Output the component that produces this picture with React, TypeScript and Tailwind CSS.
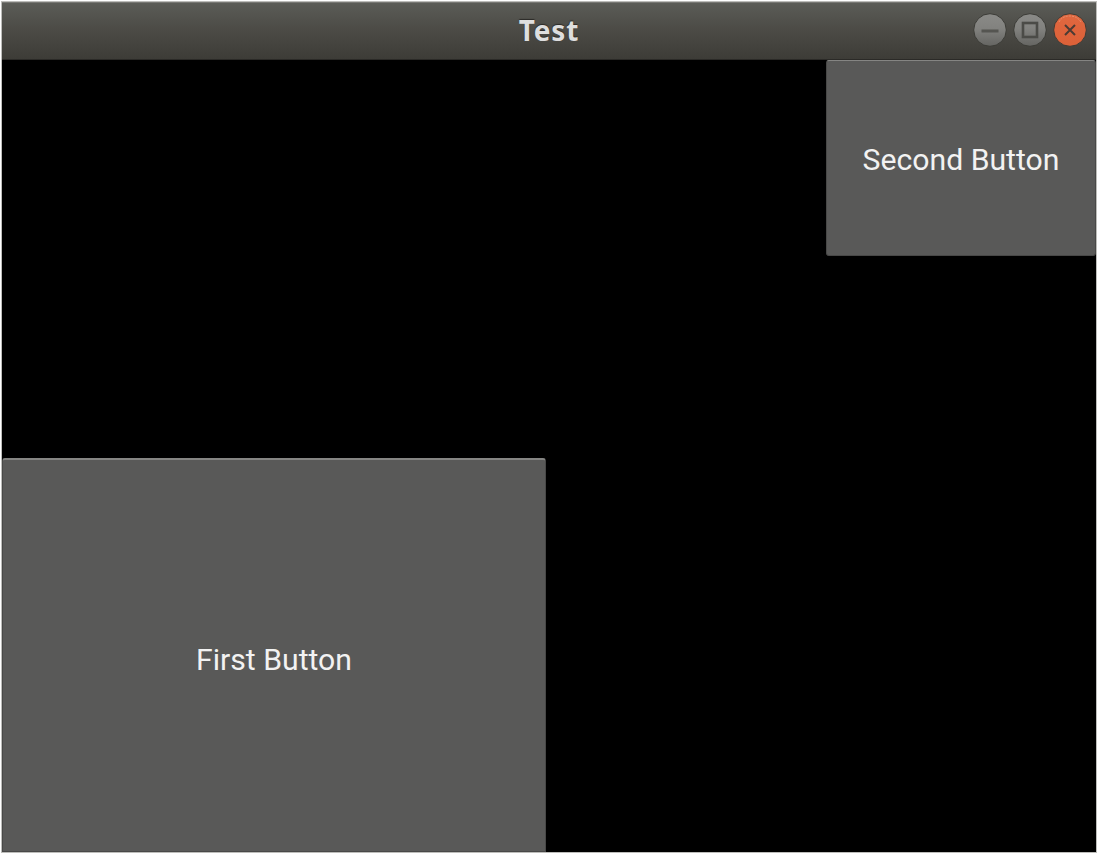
type WindowButtonProps = { kind: "minimize" | "maximize" | "close" };

function WindowButton({ kind }: WindowButtonProps) {
  const close = kind === "close";
  return (
    <button aria-label={kind} className="block h-[34px] w-[34px]">
      <svg width="34" height="34" viewBox="0 0 34 34">
        <defs>
          <linearGradient id={`${kind}-fill`} x1="0" y1="0" x2="0" y2="1">
            <stop offset="0" stopColor={close ? "#e06840" : "#8a8a87"} />
            <stop offset="0.45" stopColor={close ? "#de643c" : "#82827f"} />
            <stop offset="1" stopColor={close ? "#dd6138" : "#646461"} />
          </linearGradient>
        </defs>
        <circle cx="17" cy="17" r="16.3" fill={`url(#${kind}-fill)`} stroke="#3b3b36" strokeWidth="1" />
        {kind === "minimize" && <path d="M8.5 18H25.5" stroke="#555551" strokeWidth="3" />}
        {kind === "maximize" && (
          <rect x="10" y="10" width="14" height="14" fill="none" stroke="#4b4b47" strokeWidth="2.6" />
        )}
        {close && (
          <>
            <path d="M6 9Q9 3 17 3Q24 3 28 9" fill="none" stroke="#e5906f" strokeWidth="1" strokeDasharray="2 1" />
            <path d="M12 12L22 22M22 12L12 22" stroke="#4b3b34" strokeWidth="2" />
          </>
        )}
      </svg>
    </button>
  );
}

function TitleBar() {
  return (
    <header className="grid h-[58px] shrink-0 grid-cols-[1fr_auto_1fr] items-center border-t border-b border-t-[#777773] border-b-[#2b2a27] bg-linear-to-b from-[#5b5c57] via-[#4b4a45] to-[#3d3c37] pr-[9px]">
      <span />
      <h1 className="pb-[3px] pl-[9px] font-['Noto_Sans','Open_Sans',sans-serif] text-[28px] leading-none font-bold tracking-[0.9px] text-[#dedede] text-shadow-[0_-1px_1px_#2b2a27]">
        Test
      </h1>
      <div className="flex justify-end gap-[6px] pb-[2px]">
        <WindowButton kind="minimize" />
        <WindowButton kind="maximize" />
        <WindowButton kind="close" />
      </div>
    </header>
  );
}

export default function App() {
  return (
    <div className="h-[856px] w-[1100px] bg-white pt-[2px] pl-[2px]">
      <div className="flex h-[850px] w-[1094px] flex-col bg-black outline outline-1 outline-[#bdbdba]">
        <TitleBar />
        <main className="flex min-h-0 flex-1 flex-col justify-between font-['Roboto',sans-serif] text-[30.2px] leading-none text-[#f2f2f2]">
          <button className="h-[196px] w-[270px] self-end rounded-[3px] border border-[#484847] border-t-[#858583] bg-[#595958] pt-[5px]">
            Second Button
          </button>
          <button className="h-[394px] w-[544px] self-start rounded-t-[3px] border border-[#484847] border-t-2 border-t-[#858583] bg-[#595958] pt-[10px]">
            First Button
          </button>
        </main>
      </div>
    </div>
  );
}
